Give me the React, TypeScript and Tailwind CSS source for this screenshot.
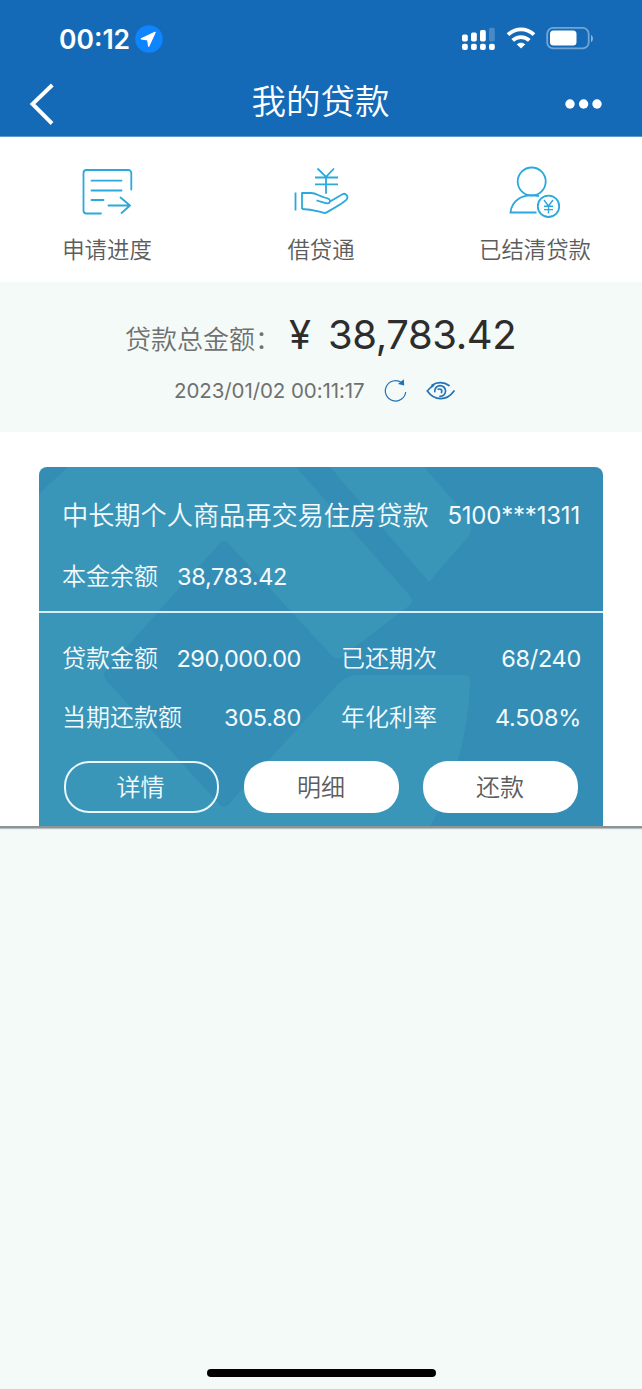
import React from "react";

const shortcuts = [
  { label: "申请进度", icon: <ProgressIcon /> },
  { label: "借贷通", icon: <HandIcon /> },
  { label: "已结清贷款", icon: <SettledIcon /> },
];

function ProgressIcon() {
  return (
    <svg width="56" height="56" viewBox="0 0 56 56" fill="none" stroke="#2ba9dc" strokeWidth="1.8" strokeLinecap="round" strokeLinejoin="round">
      <path d="M52.300 26.500V10a3 3 0 0 0-3-3H7.500a3 3 0 0 0-3 3v37.500a3 3 0 0 0 3 3H22" />
      <path d="M12.500 17.700H42.500M12.500 27.500H42.500M12.500 37H24.500M29.500 42.500H51M41.500 34.500l9.500 8-8.500 7.500" />
    </svg>
  );
}

function HandIcon() {
  return (
    <svg width="56" height="56" viewBox="0 0 56 56" fill="none" stroke="#2ba9dc" strokeWidth="1.8" strokeLinejoin="round">
      <path d="M24.500 5.500l8.500 8.300 8-8.300M33 13.800v17M22 14.500h23M22 21.300h23" />
      <path d="M2.500 29.500v18" />
      <path d="M9 46V30h9c5 0 8 3 13.500 4.500 5 1.300 6.500 2 5 5-1 2-5 .5-13-2.200" />
      <path d="M37 38.500l12.500-7.300c3-1.500 6.500 2 4 5.300-1.500 2.500-14 9.500-21 13.500C25 48.500 20 46 9 46" />
    </svg>
  );
}

function SettledIcon() {
  return (
    <svg width="56" height="56" viewBox="0 0 56 56" fill="none" stroke="#2ba9dc" strokeWidth="1.8">
      <circle cx="24.700" cy="18.500" r="14" />
      <path d="M32 33c-8-1.300-15.500-1-21 3.300-5 3.500-7 8-7.500 13.200H29.500" />
      <circle cx="41.500" cy="43.300" r="10.700" />
      <path d="M37 37l4.500 6 4.500-6M41.500 43v7.500M37 43.300h9M37 46.600h9" strokeWidth="1.400" />
    </svg>
  );
}

function StatusBar() {
  return (
    <div className="h-[68px] pt-[10px] pl-[59px] pr-[48px] flex items-center text-white">
      <span className="w-[72px] text-[26.500px] font-semibold leading-none">00:12</span>
      <svg className="ml-[4px]" width="28" height="28" viewBox="0 0 28 28">
        <circle cx="14" cy="14" r="13.800" fill="#0f84ff" />
        <path d="M20 7.500L6.300 13.800l6.500 1.100.9 6.200z" fill="#fff" stroke="#fff" strokeWidth="1.400" strokeLinejoin="round" />
      </svg>
      <svg className="ml-auto" width="34" height="24" viewBox="0 0 34 24" fill="#fff">
        <rect x="0" y="7.500" width="5.800" height="7" rx="1.700" />
        <rect x="9" y="5.500" width="5.800" height="9" rx="1.700" />
        <rect x="18" y="3" width="5.800" height="11.500" rx="1.700" />
        <rect x="27" y="0.700" width="5.800" height="13.800" rx="1.700" opacity=".22" />
        <rect x="0" y="16.700" width="5.800" height="6.300" rx="2" />
        <rect x="9" y="16.700" width="5.800" height="6.300" rx="2" />
        <rect x="18" y="16.700" width="5.800" height="6.300" rx="2" />
        <rect x="27" y="16.700" width="5.800" height="6.300" rx="2" />
      </svg>
      <svg className="ml-[10px] mb-[2px]" width="30" height="22" viewBox="0 0 30 22" fill="none" stroke="#fff" strokeWidth="3.800">
        <path d="M2 7.700C9.500.6 20.500.6 28 7.700" />
        <path d="M6.700 13.400c4.700-4.500 11.900-4.500 16.600 0" />
        <path d="M15 21.600l-4.300-4.300c2.400-2.200 6.200-2.200 8.600 0z" fill="#fff" stroke="none" />
      </svg>
      <svg className="ml-[10px] mb-[2px]" width="48" height="24" viewBox="0 0 48 24">
        <rect x="1.200" y="1.800" width="41.500" height="20.600" rx="6" fill="none" stroke="#fff" strokeOpacity=".4" strokeWidth="1.800" />
        <rect x="4" y="4.600" width="26.500" height="15" rx="3.500" fill="#fff" />
        <path d="M45 9c2.600 1.200 2.600 6 0 7.200z" fill="#fff" fillOpacity=".5" />
      </svg>
    </div>
  );
}

function TitleBar() {
  return (
    <div className="h-[68px] pl-[29px] pr-[40px] flex items-center justify-between text-white">
      <svg className="mt-[4px]" width="38" height="42" viewBox="0 0 38 42" fill="none" stroke="#fff" strokeWidth="3.900">
        <path d="M23.300 2L3.500 21l19.500 19.500" />
      </svg>
      <h1 className="text-[34.500px] font-[350] leading-none mr-[-10px] mt-[1px]">我的贷款</h1>
      <svg className="mt-[4px]" width="38" height="12" viewBox="0 0 38 12" fill="#fff">
        <circle cx="6" cy="6" r="4.700" />
        <circle cx="19.600" cy="6" r="4.700" />
        <circle cx="33" cy="6" r="4.700" />
      </svg>
    </div>
  );
}

function CardBackdrop() {
  return (
    <svg className="absolute inset-0" width="564" height="360" viewBox="0 0 564 360" fill="#3996b9">
      <path d="M29 0H257L371 129q4 5 0 9L303 190q-5 3-9 0L189 76q-4-4-8 0L67 203q-4 5 0 10L181 338q4 4 8 0L299 217q9-9 20-9H426q5 0 5 6-2 78-40 146H0V27Z" />
      <path d="M291 0H385L428 49q8 10 1 21L390 115Z" />
    </svg>
  );
}

function LoanCard() {
  return (
    <section className="relative h-[359px] mx-[39px] rounded-t-[8px] overflow-hidden bg-[#348db4] text-[#f4fbff] font-[350]">
      <CardBackdrop />
      <div className="relative">
        <div className="h-[146px] border-b-2 border-[#d5edf6] px-[23px] pt-[29px]">
          <div className="h-[40px] flex items-center justify-between">
            <span className="text-[26.200px] whitespace-nowrap">中长期个人商品再交易住房贷款</span>
            <span className="text-[24px] font-normal tracking-[-0.200px]">5100***1311</span>
          </div>
          <div className="h-[40px] mt-[21px] flex items-center text-[24px]">
            <span className="w-[115px]">本金余额</span>
            <span className="font-normal text-[23.500px] tracking-[-0.300px]">38,783.42</span>
          </div>
        </div>
        <div className="pl-[23px] pr-[22px] pt-[26px] text-[24px]">
          <div className="h-[40px] flex items-center">
            <span>贷款金额</span>
            <span className="ml-auto font-normal text-[23.500px] tracking-[-0.450px]">290,000.00</span>
            <div className="w-[240px] ml-[40px] flex items-center justify-between">
              <span>已还期次</span>
              <span className="font-normal text-[23.500px] tracking-[-0.300px]">68/240</span>
            </div>
          </div>
          <div className="h-[40px] mt-[19px] flex items-center">
            <span>当期还款额</span>
            <span className="ml-auto font-normal text-[23.500px] tracking-[-0.250px]">305.80</span>
            <div className="w-[240px] ml-[40px] flex items-center justify-between">
              <span>年化利率</span>
              <span className="font-normal text-[23.500px] tracking-[-0.250px]">4.508%</span>
            </div>
          </div>
        </div>
        <div className="mt-[23px] px-[25px] flex justify-between text-[24px]">
          <button className="w-[155px] h-[52px] pt-[2px] pr-[2px] rounded-[25px] border-2 border-[#eaf7fc]">详情</button>
          <button className="w-[155px] h-[52px] pt-[2px] rounded-[25px] bg-white text-[#5c5c5c]">明细</button>
          <button className="w-[155px] h-[52px] pt-[2px] pr-[1px] rounded-[25px] bg-white text-[#5c5c5c]">还款</button>
        </div>
      </div>
    </section>
  );
}

export default function App() {
  return (
    <div className="w-[642px] h-[1389px] flex flex-col overflow-hidden bg-[#f3faf8] font-['Inter','Noto_Sans_CJK_SC',sans-serif]">
      <header className="h-[137px] shrink-0 bg-[#146ab7] border-b border-[#5e98cb]">
        <StatusBar />
        <TitleBar />
      </header>

      <nav className="h-[145px] shrink-0 bg-white grid grid-cols-3 pt-[26px]">
        {shortcuts.map((item) => (
          <div key={item.label} className="flex flex-col items-center">
            {item.icon}
            <span className="mt-[14px] text-[22.400px] leading-[34px] font-[350] text-[#5c5c5c]">{item.label}</span>
          </div>
        ))}
      </nav>

      <section className="h-[150px] shrink-0 pt-[28px]">
        <div className="h-[50px] pl-[125px] flex items-baseline whitespace-nowrap">
          <span className="w-[164px] text-[26px] font-[350] text-[#707070]">贷款总金额：</span>
          <span className="w-[39px] text-[40px] leading-[50px] text-[#2d2d2d]">¥</span>
          <span className="text-[40px] leading-[50px] tracking-[-0.400px] text-[#2d2d2d]">38,783.42</span>
        </div>
        <div className="h-[30px] mt-[16px] pl-[174px] flex items-center text-[#707070]">
          <span className="w-[210px] text-[20.500px] tracking-[-0.080px]">2023/01/02 00:11:17</span>
          <svg width="24" height="24" viewBox="0 0 24 24" fill="none" stroke="#2272b8" strokeWidth="1.200">
            <path d="M17.500 3.600A10.200 10.200 0 1 0 21.700 13" />
            <path d="M19.300 1.500l.3 4.300-4.300-1z" fill="#2272b8" />
          </svg>
          <svg className="ml-[18px]" width="30" height="22" viewBox="0 0 30 22" fill="none" stroke="#2272b8" strokeWidth="1.700" strokeLinecap="round">
            <path d="M6 5.200C11 1.800 18 1.800 23 5.500" />
            <path d="M7.500 5.500C5 7 2.800 9 1.300 11 8.500 21 20.500 21.500 28 11" />
            <path d="M8.800 11.700a5.400 5.400 0 1 1 5.200 4.700" />
            <path d="M12.200 9.300c2.500-1 4.500 1 3.300 3.200" />
          </svg>
        </div>
      </section>

      <main className="h-[396px] shrink-0 bg-white pt-[35px] border-b-2 border-[#8d9496] shadow-[0_1px_1px_#b9c0c1]">
        <LoanCard />
      </main>

      <footer className="mt-auto pb-[12px] flex justify-center">
        <div className="w-[229px] h-[8px] rounded-full bg-black" />
      </footer>
    </div>
  );
}
